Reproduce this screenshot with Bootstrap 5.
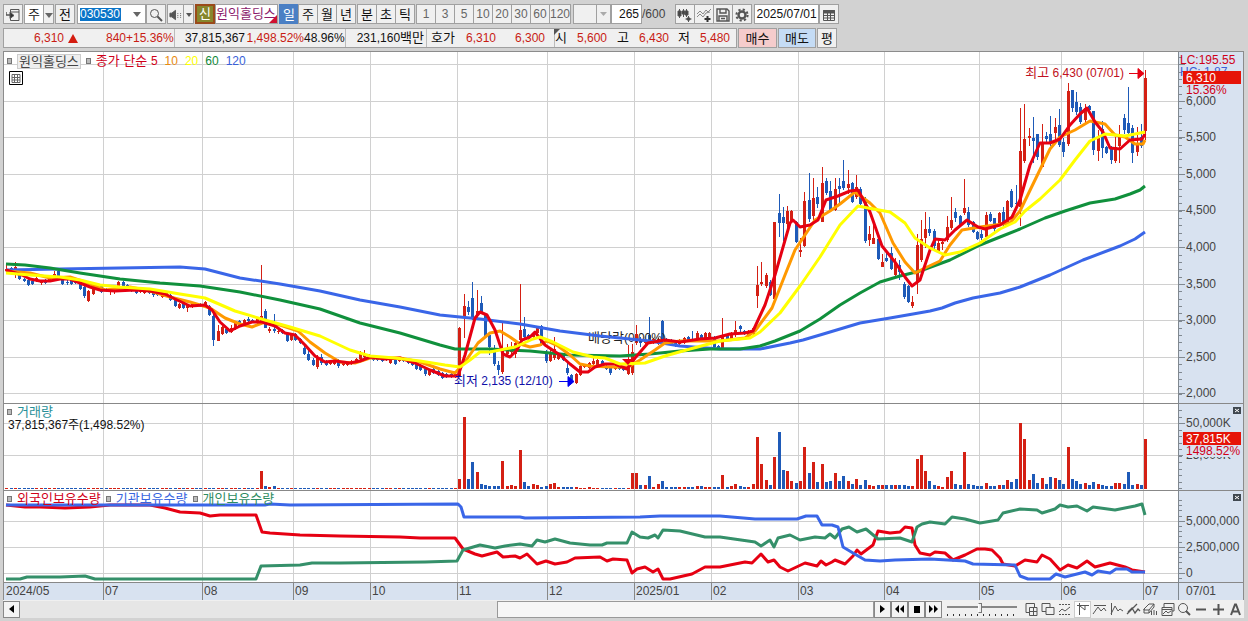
<!DOCTYPE html>
<html lang="ko">
<head>
<meta charset="utf-8">
<meta name="viewport" content="width=device-width, initial-scale=1">
<title>원익홀딩스 차트</title>
<link href="https://cdn.jsdelivr.net/npm/bootstrap@5.3.0/dist/css/bootstrap.min.css" rel="stylesheet">
<style>
:root{--ui:"Liberation Sans","Noto Sans CJK KR",sans-serif;--edge:#a0a0a0}
body{background:#d2d2d2;font:13px/18px var(--ui);color:#111}
.edges{padding:4px 4px 0 3px}
.bar{height:20px}
.bar .btn,.bar select,.bar input,.boxed{height:20px;border:1px solid var(--edge);border-radius:0;padding:0;background:#f0f0f0;color:#111;font:13px/17px var(--ui);box-sizing:border-box}
.bar .btn{min-width:20px;flex:none}
.bar .btn+.btn{margin-left:-1px}
.bar .btn.grp{margin-left:1px}
.bar .num .btn{color:#666;font-size:12px}
.bar .btn.active{background:#4a7fc4;color:#fff;border-color:#4a7fc4}
.bar .white{background:#fff}
.bar .bare{border:0;background:transparent}
.bar .code{background:#0a74c8;color:#fff;width:41px;height:13px;font-size:12px;line-height:13px;margin-left:2px}
.bar .cnt{width:31px;background:#fff;text-align:right;font-size:12px;padding-right:2px}
.bar .date{width:65px;background:#fff;font-size:12px;text-align:center}
.bar select:disabled{appearance:none;opacity:1;background:#f0f0f0 url("data:image/svg+xml,%3Csvg xmlns='http://www.w3.org/2000/svg' width='14' height='18'%3E%3Cpath d='M.5 0V18' stroke='%23a0a0a0'/%3E%3Cpath d='M4 7H11L7.500 11Z' fill='%23aaa'/%3E%3C/svg%3E") right center no-repeat}
.w-pick{width:38px}.w-code{width:69px}.w-name{width:63px}.w-total{width:33px}
.gap-l{margin-left:2px}
.slim{min-width:17px!important}.arrow{min-width:11px!important}
.total{font-size:12px;color:#444}
.sin{background:#86862c!important;border:2px solid #9a4a1a!important;color:#fff!important;line-height:14px!important}
.nm{color:#8b1a6b;position:relative;white-space:nowrap;overflow:hidden}
.nm::after{content:"";position:absolute;right:0;bottom:0;border:4px solid;border-color:transparent #d01030 #d01030 transparent}
.quote{width:734px;height:20px;border:1px solid var(--edge);background:#f0f0f0;flex:none}
.quote span{text-align:right;font-size:12px;line-height:18px;white-space:nowrap;flex:none}
.quote .ko{font-size:13px}
.quote .cellend{border-right:1px solid #bbb;padding-right:2px}
.c1{width:60px}.c2{width:48px}.c3{width:64px}.c4{width:70px}.c5{width:59px}.c6{width:42px}.c7{width:81px}.c8{width:28px}.c9{width:41px}.c10{width:59px}.c11{width:12px}.c12{width:40px}.c13{width:22px}.c14{width:21px}
.c1+.tri{width:14px}
.c2{width:48px}.c3{width:49px}
.quote .c10{padding-right:9px}
.corner{position:relative}
.corner::before{content:"";position:absolute;left:-1px;top:0;border:3px solid;border-color:#555 transparent transparent #555}
.up{color:#c81c14}
.chartbox{border:1px solid #8c8c8c;border-bottom:0;background:#fff;min-height:400px;margin:3px 4px 0 3px}
.plot{min-width:0;position:relative}
.axis{width:65px;background:#d8e2f0;border-left:1px solid #808890;position:relative}
.plot svg,.axis svg{position:absolute;left:0;top:0;width:100%;height:100%;overflow:hidden}
svg text{font:12px var(--ui)}
svg .han{font-size:13px}
.legendrow{position:absolute;left:3px;font-size:13px;line-height:15px;white-space:nowrap;gap:5px}
.sq{width:5px;height:6px;border:1px solid #777;background:#bbb;display:inline-block;flex:none}
.tag{background:#eee;border:1px solid #ccc;line-height:13px;padding:0 1px;color:#444}
.g12{font-size:12px}
.l1{top:1px}.l3{top:352px}.l4{top:366px;left:4px}.l5{top:439px}
.plot svg.l2{left:5px;top:19px;width:14px;height:14px}
.foot{height:18px;background:#f0f0f0;margin:0 4px 3px 3px}
.foot .btn{width:17px;height:17px;border:1px solid #888;border-radius:0;padding:0;background:#f4f4f4;line-height:0;flex:none}
.foot .btn.flat{border:0;background:transparent;width:17px}
.foot .btn.down{background:#fff;border:1px solid #ccc}
.track{background:#e6e6e6;height:17px}
.lead-space{flex:56}
.grip{flex:44;background:#f6f6f6;border:1px solid #999}
.speed{width:70px;height:17px;flex:none;margin:0 6px 0 5px;appearance:none;-webkit-appearance:none;background:linear-gradient(#888,#888) 0 5px/100% 2px no-repeat,repeating-linear-gradient(90deg,#333 0 1px,transparent 1px 6px) 0 13px/100% 2px no-repeat}
.speed::-webkit-slider-thumb{-webkit-appearance:none;width:4px;height:10px;background:#f0f0f0;border:1px solid #777;border-left-color:#fff;margin-top:-2px}
.ic{fill:none;stroke:#555;stroke-width:1;display:inline-block;vertical-align:middle}
</style>
</head>
<body class="d-flex flex-column min-vh-100 overflow-x-hidden">
<header class="edges" id="tools">
<div class="bar d-flex align-items-center">
 <button class="btn" aria-label="화면 이동"><svg class="ic" width="14" height="14" viewBox="0 0 14 14"><path d="M4.500 4V1.500H13V12.500H4.500V10M4.500 4H13" /><path d="M0 4V7H4" stroke-width="1.500"/><path d="M4 4L8 7.500L4 10.500Z" fill="#333"/></svg></button>
 <button class="btn white grp">주</button><button class="btn arrow" aria-label="목록"><svg width="8" height="5"><path d="M0 0H8L4 5Z" fill="#666"/></svg></button>
 <button class="btn grp">전</button>
 <div class="boxed white w-code d-flex align-items-center gap-l"><input class="code bare" value="030530" aria-label="종목코드"><svg class="ms-auto me-1" width="8" height="5"><path d="M0 0H8L4 5Z" fill="#666"/></svg></div>
 <button class="btn" aria-label="검색"><svg class="ic" width="14" height="14" viewBox="0 0 14 14"><circle cx="5.500" cy="5.500" r="4"/><path d="M8.500 8.500L13 13" stroke-width="2"/></svg></button>
 <button class="btn grp slim" aria-label="소리"><svg class="ic" width="13" height="12" viewBox="0 0 14 12"><path d="M1 4H3L7 1V11L3 8H1Z" fill="#555"/><path d="M9.500 4V9M12.500 4V9" stroke-dasharray="1 1"/></svg></button><button class="btn arrow" aria-label="목록"><svg width="6" height="4"><path d="M0 0H6L3 4Z" fill="#555"/></svg></button>
 <button class="btn grp sin">신</button><div class="boxed white w-name nm">원익홀딩스</div>
 <button class="btn grp active">일</button><button class="btn">주</button><button class="btn">월</button><button class="btn">년</button>
 <button class="btn grp">분</button><button class="btn">초</button><button class="btn">틱</button>
 <div class="num d-flex" id="mins"></div>
 <select class="w-pick gap-l" disabled aria-label="주기"><option></option></select>
 <input class="cnt" value="265" aria-label="봉 개수"><span class="total w-total">/600</span>
 <button class="btn" aria-label="봉 추가"><svg class="ic" width="16" height="14" viewBox="0 0 16 14"><path d="M2.500 1V10M6.500 1V9M9.500 1V9M11.500 8V14M8.500 11H14.500" stroke-width="1"/><path d="M1 3H4V8H1ZM5 3H8V6H5ZM8 3H11V7H8Z" fill="#444"/><path d="M10 10H13V12H10Z" fill="#444"/></svg></button><button class="btn" aria-label="지표 추가"><svg class="ic" width="16" height="14" viewBox="0 0 16 14"><path d="M1 6L4 3L7 6L10 2L12 4L15 1M1 9L4 6L7 9L10 5L14 4" stroke="#888"/><path d="M11.500 8V14M8.500 11H14.500" stroke="#333" stroke-width="2"/></svg></button><button class="btn" aria-label="저장"><svg class="ic" width="14" height="14" viewBox="0 0 14 14"><path d="M1 1H11L13 3V13H1ZM4 1V5H10V1M3 13V8H11V13M5 10.500H9" stroke-width="1.400"/></svg></button><button class="btn" aria-label="설정"><svg class="ic" width="14" height="14" viewBox="0 0 14 14"><circle cx="7" cy="7" r="3.500" stroke-width="2.400"/><circle cx="7" cy="7" r="5.600" stroke-width="2" stroke-dasharray="2.200 2.200"/></svg></button>
 <input class="date gap-l" value="2025/07/01" aria-label="날짜"><button class="btn" aria-label="달력"><svg class="ic" width="12" height="11" viewBox="0 0 12 11"><path d="M.5 .5H11.500V10.500H.5ZM.5 5.500H11.500M4.500 3V10M7.500 3V10M.5 8H11.500"/><path d="M.5 .5H11.500V3H.5Z" fill="#555"/></svg></button>
</div>
<div class="bar d-flex mt-1">
 <div class="quote d-flex">
 <span class="c1 up">6,310</span><span class="tri"><svg width="10" height="9"><path d="M5 0L10 9H0Z" fill="#d41c10"/></svg></span><span class="c2 up">840</span><span class="c3 up cellend">+15.36%</span>
 <span class="c4">37,815,367</span><span class="c5 up">1,498.52%</span><span class="c6 cellend">48.96%</span>
 <span class="c7 cellend">231,160<span class="ko">백만</span></span><span class="c8 ko">호가</span><span class="c9 up">6,310</span><span class="c10 up cellend">6,300</span>
 <span class="c11 ko corner">시</span><span class="c12 up">5,600</span><span class="c13 ko">고</span><span class="c12 up">6,430</span><span class="c14 ko">저</span><span class="c12 up">5,480</span>
 </div>
 <button class="btn grp" style="width:39px;background:#f5cccc">매수</button><button class="btn grp" style="width:38px;background:#c5dcf5">매도</button><button class="btn grp">평</button>
</div>
</header>
<main class="chartbox flex-grow-1 d-flex" id="chart">
 <div class="plot flex-grow-1"><svg id="plot" role="img" aria-label="주가 차트"></svg>
 <div class="legendrow l1 d-flex align-items-center"><i class="sq"></i><span class="tag">원익홀딩스</span><i class="sq"></i><span style="color:#d00018">종가 단순 <span class="g12">5</span></span><span class="g12 gap-l" style="color:#e88a10">10</span><span class="g12 gap-l" style="color:#ff0">20</span><span class="g12 gap-l" style="color:#108838">60</span><span class="g12 gap-l" style="color:#3a5fd8">120</span></div>
 <svg class="l2" viewBox="0 0 14 14"><path d="M.5 .5H13.500V13.500H.5Z" fill="#fff" stroke="#000"/><path d="M3 3.500H11V11.500H3ZM5.500 3V11M8.500 3V11M3 6.500H11M3 9H11" fill="none" stroke="#666"/></svg>
 <div class="legendrow l3 d-flex align-items-center"><i class="sq"></i><span style="color:#289098">거래량</span></div>
 <div class="legendrow l4 g12">37,815,367주(1,498.52%)</div>
 <div class="legendrow l5 d-flex align-items-center"><i class="sq"></i><span style="color:#d00018">외국인보유수량</span><i class="sq"></i><span style="color:#3a66e0">기관보유수량</span><i class="sq"></i><span style="color:#2e8c62">개인보유수량</span></div>
 </div>
 <div class="axis flex-shrink-0"><svg id="axis" role="img" aria-label="가격 축"></svg></div>
</main>
<footer class="foot d-flex align-items-center" id="foot">
 <button class="btn" aria-label="왼쪽"><svg width="5" height="8"><path d="M5 0V8L0 4Z"/></svg></button>
 <div class="track d-flex flex-grow-1"><div class="lead-space"></div><div class="grip"></div></div>
 <button class="btn" aria-label="재생"><svg width="5" height="8"><path d="M0 0V8L5 4Z"/></svg></button><button class="btn" aria-label="뒤로"><svg width="9" height="8"><path d="M4 0V8L0 4ZM9 0V8L5 4Z"/></svg></button><button class="btn" aria-label="정지"><svg width="6" height="7"><path d="M0 0H6V7H0Z"/></svg></button><button class="btn" aria-label="앞으로"><svg width="9" height="8"><path d="M0 0V8L4 4ZM5 0V8L9 4Z"/></svg></button>
 <input type="range" class="speed" min="0" max="100" value="47" aria-label="속도">
</footer>
<script src="https://cdn.jsdelivr.net/npm/bootstrap@5.3.0/dist/js/bootstrap.bundle.min.js"></script>
<script>
document.getElementById('mins').innerHTML=[1,3,5,10,20,30,60,120].map((n,i)=>`<button class="btn${i?'':' grp'}">${n}</button>`).join('');

/* drawing tools at the right end of the footer */
const tools=[
 ['새 창','<path d="M6 10.500H2V1.500H10.500V6M5.500 5.500H13V13.500H5.500ZM9.500 6V13M6 9.500H13"/>'],
 ['겹치기','<path d="M1 1.500H9V9.500H1Z"/><path d="M5 5.500H13V12.500H5Z" fill="#f0f0f0"/>'],
 ['범위','<path d="M1 2.500H13M1 12.500H13" stroke-dasharray="2 1"/><path d="M1 10L4 7L7 9L12 5"/>'],
 ['기준선','<path d="M2 3.500H14M4.500 1V13M5 4L10 8M10 4V8"/>',1],
 ['추세','<path d="M2 3.500H14M1 12L6 5L9 9L12 6L14 9"/>'],
 ['파동','<path d="M2.500 1V13M2 12L6 4L9 9L11 7L14 9"/>'],
 ['각도','<path d="M1 12L11 2M2 10L6 6L9 11L12 7L14 9" stroke-width="1.300"/>'],
 ['지우개','<path d="M1 7L6 2H11L6 8H1ZM6 8V11H1V7M6 11L11 5V2M8.500 9V13M11 8V13M13.500 9V13"/>'],
 ['비교','<path d="M4 5V1.500H14V9H12M2 5.500H12V13.500H2ZM2 7.500H12M3 12L6 9L8 11L11 9"/>'],
 ['돋보기','<circle cx="6" cy="6" r="4.500"/><path d="M9 9L13 13" stroke-width="2"/>'],
 ['축소','<path d="M2 7.500H12" stroke-width="2"/>'],
 ['확대','<path d="M2 7.500H13M7.500 2V13" stroke-width="2"/>'],
 ['글자','<path d="M3 13L7 2.500H8L12 13M4.500 9.500H10.500" stroke-width="2"/>']];
document.getElementById('foot').insertAdjacentHTML('beforeend',tools.map(t=>`<button class="btn flat${t[2]?' down':''}" aria-label="${t[0]}"><svg class="ic" width="15" height="15" viewBox="0 0 15 15">${t[1]}</svg></button>`).join(''));

/* candles: direction, body top, body bottom [, high, low] */
const candles=`r269,271,263,272 b268,274,267,275 r267,275,262,278 b270,279 b279,281 b280,285 b281,284 r278,281,275,282 r281,283,280,285 b280,283 r277,281 r274,279,271,280 b271,278 b280,284 b282,283,280,285 b280,284,278,285 b281,283 b284,289 b287,296,285,298 r291,301 r288,294 r286,289,284,290 b286,292 b289,291 r290,292,289,295 r290,291,289,294 r282,290 b282,286 b285,289 b288,291 b290,293 r291,292 r291,293 b291,293 b292,295,291,297 b293,295 r294,297 r293,296,291,297 b295,300 b299,306 r304,308 b304,308 r305,308,304,312 r304,307 b304,306 b304,306 r302,305,301,306 b306,315 b316,340,314,346 r331,341,325,341 r327,334 b329,333 r328,332,325,333 r323,329 b321,326 r320,324 b319,321,317,322 b320,322 r319,323 r316,323,265,325 b311,328,309,328 r329,331,327,333 b329,331,314,333 r331,332,329,334 b330,333 b334,341 r334,340 b334,340 b339,343 b348,354,345,355 b354,360,350,361 b360,365,358,366 r357,367,355,369
b357,363,354,365 b361,365 r362,364 r361,364 b361,366,359,368 r362,365 r362,365 r361,364 r359,362 r352,359 r354,357,350,358 r355,357 b357,360 b358,360 b358,361 r357,360 r360,363 b360,364 r358,361 b358,361 b361,363 b363,365 b364,369 b365,370 b369,374,368,376 r370,375 b369,373 b371,375 b373,378 b374,377 b374,377 r374,377 r328,376 r306,318,294,338 b307,312,301,315 b298,318,282,320 r311,315,290,318 b303,312,296,314 b315,336 b335,347,333,355 b348,364,345,366 b365,370,361,375 r351,372,323,374 r350,354,344,356 r350,352,342,355 r343,354,341,358 r330,340,284,345 b329,337,317,339 b335,339 r333,337 r328,333 b326,345 b352,361,350,363 r354,361,348,362 r349,358,337,360 r355,359 b355,360 b368,373,362,375 b375,380 r374,383 r366,375 r365,367 r363,368 r361,364,358,366 r360,365 b361,364 b366,369 b367,373,366,375 r366,369 b366,369 b368,370 r368,374,345,375 r352,373,344,375 r334,343,325,345 b340,343,337,347 r340,343 b335,341,317,343 r339,343 r339,344 b321,341
b339,343 b340,344 b342,346 r340,344 r338,343 b337,341 b339,341,331,342 r333,339,331,341 b335,338 r333,338 r333,337 b337,347 b346,349 r337,348,318,349 b336,339 r333,340 r330,335,321,337 b326,329,325,334 b331,334 r331,335 r328,334 r285,296,266,308 r282,284,262,286 r275,286,273,288 b282,295,280,296 r222,299,222,303 b213,223,194,237 b217,223,207,241 r211,224,206,232 r211,222 b222,242 r250,252,238,257 r201,246,192,247 b200,219,173,222 r198,216,178,220 b197,204,187,208 r183,222,167,222 b181,193,178,195 b191,210,181,212 r189,210,178,211 b186,189,178,203 b181,188,160,190 r184,188,170,194 b183,202 r187,197,175,199 b189,204,187,206 b199,241,197,243 r234,240,226,246 r238,244,225,244 b239,259 r262,267,254,267 b258,261,252,262 b253,269,247,270 r263,275,258,278 b265,272,260,280 b284,297,282,299 b286,302 r302,306,296,308 r245,281,234,294 r239,260,220,262 r229,238,212,248 b229,233,217,236 b231,246,229,250 r243,251,240,253 r242,244,241,250 r227,240,216,242 r220,228,197,230
b212,218,208,222 b216,226 r208,213,179,215 b212,225,207,227 b222,232 b232,239 b234,238,230,240 r215,237,212,238 b214,221,212,222 b218,229,218,232 r213,225 b212,224,207,226 r201,222 b191,207,189,208 b203,204,185,210 r151,207,108,226 r139,161,104,163 r136,138,128,146 b138,141,117,163 b134,157,134,160 r142,167,124,167 b136,139,132,142 b134,144,116,146 r127,133,118,140 b125,145,109,147 b142,152,138,157 r91,144,83,146 b90,108,90,112 b102,112,92,115 b107,122,103,124 r108,120,104,123 b106,110 b111,150,111,155 r137,151,130,161 b129,148,121,158 b147,153 b149,160,146,164 r147,161,137,163 r137,146,125,163 b118,130,114,134 b123,133,87,134 b128,153,125,163 r145,152,127,156 b137,146,124,148 r78,131,70,140`.trim().split(/\s+/).map(s=>[s[0],...s.slice(1).split(',').map(Number)]);

/* weekly volume where it stands out: index -> bar height */
const vol={59:18,61:2,60:3,62:3,105:10,106:72,107:10,108:27,109:17,110:5,111:4,112:3,113:3,114:3,115:28,116:3,117:4,118:3,119:39,120:7,121:3,122:5,123:4,124:2,125:3,126:5,127:6,128:2,129:2,130:2,131:2,132:2,135:2,145:16,146:16,147:4,148:4,149:13,150:2,151:5,152:8,153:2,154:2,155:2,156:2,157:2,158:2,159:2,160:3,161:3,162:2,163:2,164:2,165:2,166:14,167:2,168:3,169:5,170:3,171:2,172:2,173:5,174:52,175:25,176:9,177:4,178:32,179:57,180:19,181:18,182:8,183:6,184:8,185:42,186:16,187:27,188:7,189:25,190:7,191:8,192:16,193:8,194:13,195:8,196:5,197:10,198:4,199:9,200:4,201:3,202:4,203:4,204:4,205:4,206:4,207:4,208:4,209:3,210:3,211:30,212:34,213:18,214:8,215:4,216:3,217:2,218:12,219:18,220:5,221:4,222:37,223:5,224:4,225:3,226:3,227:6,228:3,229:3,230:4,231:4,232:9,233:7,234:10,235:66,236:50,237:9,238:15,239:6,240:11,241:5,242:12,243:11,244:9,245:5,246:42,247:10,248:8,249:5,250:6,251:4,252:7,253:5,254:4,255:3,256:3,257:6,258:6,259:5,260:17,261:4,262:5,263:4,264:50};

const lines=[
['#3a66e8',3,'6,270 60,269 120,268 180,267 205,269 240,278 280,284 320,291 360,300 400,307 440,315 480,319 520,324 560,331 600,336 650,341 680,346 720,349 760,349 790,343 803,340 820,335 860,323 890,318 913,314 930,311 942,308 955,303 973,298 1000,293 1020,287 1050,275 1083,260 1120,246 1135,239 1145,232'],
['#10903c',3,'6,264 25,265 50,268 80,273 120,279 160,283 200,286 240,292 280,300 320,309 360,323 400,333 440,345 455,349 490,349 530,351 570,355 620,356 650,354 680,351 710,349 740,349 760,346 775,341 800,331 820,319 840,305 860,293 880,282 900,276 920,271 950,260 980,245 1000,237 1020,229 1045,218 1065,211 1090,203 1115,199 1130,194 1140,190 1145,186'],
['#f90',3,'6,271 30,273 50,278 70,277 85,282 105,290 130,287 150,291 170,297 190,302 210,308 225,318 240,324 252,327 265,322 280,325 298,331 310,342 325,353 340,362 355,363 370,358 385,358 400,358 420,362 440,369 455,373 465,362 478,343 490,333 500,331 510,337 520,344 530,347 540,345 547,341 558,346 570,355 580,364 590,366 610,367 628,367 640,360 655,350 665,343 680,341 720,341 745,338 755,331 772,308 785,275 795,250 805,235 815,220 830,211 840,204 855,192 870,203 880,213 893,243 905,262 915,273 925,268 940,261 950,245 962,230 980,227 1010,223 1020,211 1035,180 1050,149 1060,137 1075,130 1090,121 1105,124 1115,135 1125,137 1135,144 1143,144 1145,140'],
['#e60012',3,'6,270 22,275 30,279 40,281 50,281 60,279 70,279 80,283 90,287 100,290 115,291 135,290 150,291 165,294 175,299 190,306 205,305 212,310 220,322 230,331 240,326 252,322 262,322 275,326 285,333 295,335 305,345 315,356 325,362 335,361 350,363 360,361 370,357 385,359 400,358 415,363 430,370 445,376 458,376 465,355 475,318 480,312 487,315 495,330 503,354 510,357 517,350 522,340 530,337 535,332 545,345 560,355 570,364 580,372 588,372 595,367 605,364 615,364 627,369 635,358 648,343 665,340 680,342 700,339 715,338 730,334 745,333 753,331 765,305 775,275 790,223 793,220 800,227 810,225 818,220 826,200 838,196 850,191 858,190 870,212 882,246 895,262 905,277 912,286 920,280 930,250 935,239 945,240 955,230 967,220 978,227 985,229 1000,225 1012,217 1020,200 1030,165 1040,143 1050,143 1060,139 1070,125 1080,114 1087,108 1095,122 1103,132 1110,148 1120,149 1130,140 1142,139 1145,134'],
['#ff0',3,'6,273 30,275 60,277 80,280 100,285 120,287 150,289 180,294 205,298 235,311 265,320 290,327 320,336 350,350 370,356 395,358 420,361 445,365 460,367 470,360 480,352 490,352 515,347 533,339 540,337 553,342 573,352 593,357 605,358 620,364 645,363 665,356 690,349 720,341 750,338 760,332 780,313 800,286 820,257 840,225 858,206 868,208 890,212 905,223 915,238 930,248 945,255 960,252 980,243 1000,229 1015,222 1025,211 1040,199 1060,180 1075,160 1090,141 1105,134 1125,136 1145,132'],
['#e60012',3,'6,505 25,507 40,507 65,508 90,507 110,505 150,505 165,508 180,512 200,513 210,516 220,515 256,515 262,532 270,533 300,535 340,536 400,537 420,538 455,538 463,549 475,554 482,556 497,552 503,557 515,556 520,558 527,554 537,564 546,561 555,564 567,562 575,558 600,557 607,561 613,559 627,560 632,573 637,569 645,567 653,572 658,569 663,579 670,579 692,574 705,567 720,567 745,562 752,563 761,554 768,562 774,560 780,567 788,571 805,563 817,566 821,561 826,565 832,562 835,560 845,564 853,556 857,550 861,554 873,545 878,531 890,533 900,532 905,527 912,528 915,545 920,553 930,555 935,552 945,553 953,560 965,555 977,549 985,549 992,550 1000,558 1003,564 1015,566 1025,560 1037,562 1042,555 1050,559 1060,570 1068,565 1077,568 1087,561 1095,567 1110,563 1125,567 1132,570 1145,572'],
['#35906a',3,'6,579 20,579 27,577 60,577 85,576 95,579 256,579 261,566 300,565 312,563 340,563 425,562 457,561 463,550 480,545 495,548 505,546 520,544 532,546 537,540 545,542 555,539 570,543 590,545 602,545 607,543 627,543 632,532 640,537 648,538 655,535 658,538 663,530 680,531 705,537 720,537 755,542 761,546 770,540 774,547 778,538 790,535 800,540 815,537 825,538 830,534 835,538 842,529 849,527 857,532 866,529 878,539 900,538 912,542 917,527 922,524 930,522 945,524 952,517 965,519 980,523 998,520 1003,513 1020,509 1037,510 1042,513 1055,509 1060,505 1068,507 1077,506 1087,511 1093,507 1115,510 1135,506 1142,504 1145,515'],
['#3a66e8',3,'6,505 265,505 270,504 290,505 458,504 461,507 464,517 520,517 525,518 640,517 660,516 720,516 755,519 797,519 806,516 817,516 822,525 832,525 838,527 843,547 853,553 865,560 880,561 895,560 930,559 965,561 973,564 1015,565 1020,576 1028,579 1050,579 1056,574 1065,577 1085,572 1092,575 1098,571 1110,573 1116,569 1127,569 1132,572 1145,572']];
const months=[[5,'2024/05'],[103,'07'],[202,'08'],[293,'09'],[370,'10'],[457,'11'],[547,'12'],[634,'2025/01'],[711,'02'],[798,'03'],[884,'04'],[979,'05'],[1061,'06'],[1143,'07']];
const prices=[[64,''],[101,'6,000'],[137,'5,500'],[174,'5,000'],[210,'4,500'],[247,'4,000'],[284,'3,500'],[320,'3,000'],[357,'2,500'],[393,'2,000']];

/* the data is in base units: plot origin (4,52), 1174 wide and 548 high */
function draw(){
 const el=document.getElementById('plot'),W=el.clientWidth,H=el.clientHeight;
 const X=v=>Math.round((v-4)*W/1174),Y=v=>Math.round((v-52)*H/548);
 const hl=(y,c)=>`<path d="M0 ${Y(y)+.5}H${W}" stroke="${c}"/>`;
 let s='';
 [...prices.map(p=>p[0]),423,455,521,547,573].forEach(y=>s+=hl(y,'#d0d0d0'));
 months.slice(1).forEach(m=>s+=`<path d="M${X(m[0])+.5} 0V${Y(582)}" stroke="#d0d0d0"/>`);
 s+=`<rect y="${Y(582)}" width="${W}" height="${H-Y(582)}" fill="#d8e2f0"/>`;
 [403,490,582].forEach(y=>s+=hl(y,'#888'));
 months.forEach((m,i)=>{if(i)s+=`<path d="M${X(m[0])+.5} ${Y(582)}V${H}" stroke="#888"/>`;s+=`<text x="${X(m[0])+(i?2:1)}" y="${Y(595)}" fill="#444">${m[1]}</text>`});
 candles.forEach((c,i)=>{
  const x=X(6.3+i*4.314),k=c[0]=='r'?'#d42014':'#1e5ab8',hi=c[3]||c[1]-1,lo=c[4]||c[2]+1;
  s+=`<rect x="${x}" y="${Y(hi)}" width="1" height="${Math.max(1,Y(lo)-Y(hi))}" fill="${k}"/><rect x="${x-1}" y="${Y(c[1])}" width="3" height="${Math.max(1,Y(c[2])-Y(c[1]))}" fill="${k}"/>`;
  const v=vol[i]||1;s+=`<rect x="${x-1}" y="${Y(489-v)}" width="3" height="${Y(489)-Y(489-v)}" fill="${k}"/>`;
 });
 s+=`<text x="${X(588)}" y="${Y(342)}" fill="#222"><tspan class="han">배당락</tspan>(0.00%)</text>`;
 lines.forEach(l=>s+=`<polyline fill="none" stroke="${l[0]}" stroke-width="${l[1]}" stroke-linejoin="round" points="${l[2].split(' ').map(p=>{const q=p.split(',');return X(q[0])+','+Y(q[1])}).join(' ')}"/>`);
 s+=`<text x="${X(1124)}" y="${Y(77)}" text-anchor="end" fill="#c01020"><tspan class="han">최고</tspan> 6,430 (07/01)</text><path d="M${X(1129)} ${Y(73)+.5}h9v-5l6 5l-6 5v-5" stroke="#e60012" fill="#e60012"/>`;
 s+=`<text x="${X(454)}" y="${Y(385)}" fill="#1010a8"><tspan class="han">최저</tspan> 2,135 (12/10)</text><path d="M${X(559)} ${Y(381)+.5}h9v-5l6 5l-6 5v-5" stroke="#00e" fill="#00e"/>`;
 s+=`<path d="M${X(622)} ${Y(359)}h11l-5 6z" fill="#e60012"/>`;
 el.innerHTML=s;
 let a='';
 const t=(y,str,c='#444',x=7)=>a+=`<text x="${x}" y="${Y(y)}" fill="${c}">${str}</text>`;
 const tick=(y,n)=>a+=`<path d="M0 ${Y(y)+.5}H${n}" stroke="#808890"/>`;
 for(let y=57;y<400;y+=7.32)tick(y,3);
 for(let y=410;y<489;y+=6.5)tick(y,3);
 for(let y=500;y<580;y+=5.2)tick(y,3);
 prices.forEach(p=>{tick(p[0],6);t(p[0]+4,p[1])});
 [[423,'50,000K'],[455,'25,000K'],[521,'5,000,000'],[547,'2,500,000'],[573,'0']].forEach(p=>{tick(p[0],6);t(p[0]+4,p[1])});
 t(64,'LC:195.55','#d00018',1);t(76,'HC: 1.87','#3a5fd8',1);
 const tag=(y,v,pct)=>{a+=`<rect x="4" y="${Y(y+13)}" width="58" height="12" fill="#d8e2f0"/>`;t(y+23,pct,'#d00018');a+=`<rect x="4" y="${Y(y)}" width="58" height="13" fill="#e61408"/>`;t(y+11,v,'#fff')};
 tag(71,'6,310','15.36%');tag(432,'37,815K','1498.52%');
 [403,490,582].forEach(y=>a+=`<path d="M0 ${Y(y)+.5}H66" stroke="#888"/>`);
 [407,494].forEach(y=>a+=`<rect x="54" y="${Y(y)}" width="8" height="7" fill="#404850"/><path d="M56 ${Y(y)+2}l4 3m0 -3l-4 3" stroke="#fff"/>`);
 t(595,'07/01');
 document.getElementById('axis').innerHTML=a;
}
draw();addEventListener('resize',draw);
</script>
</body>
</html>
